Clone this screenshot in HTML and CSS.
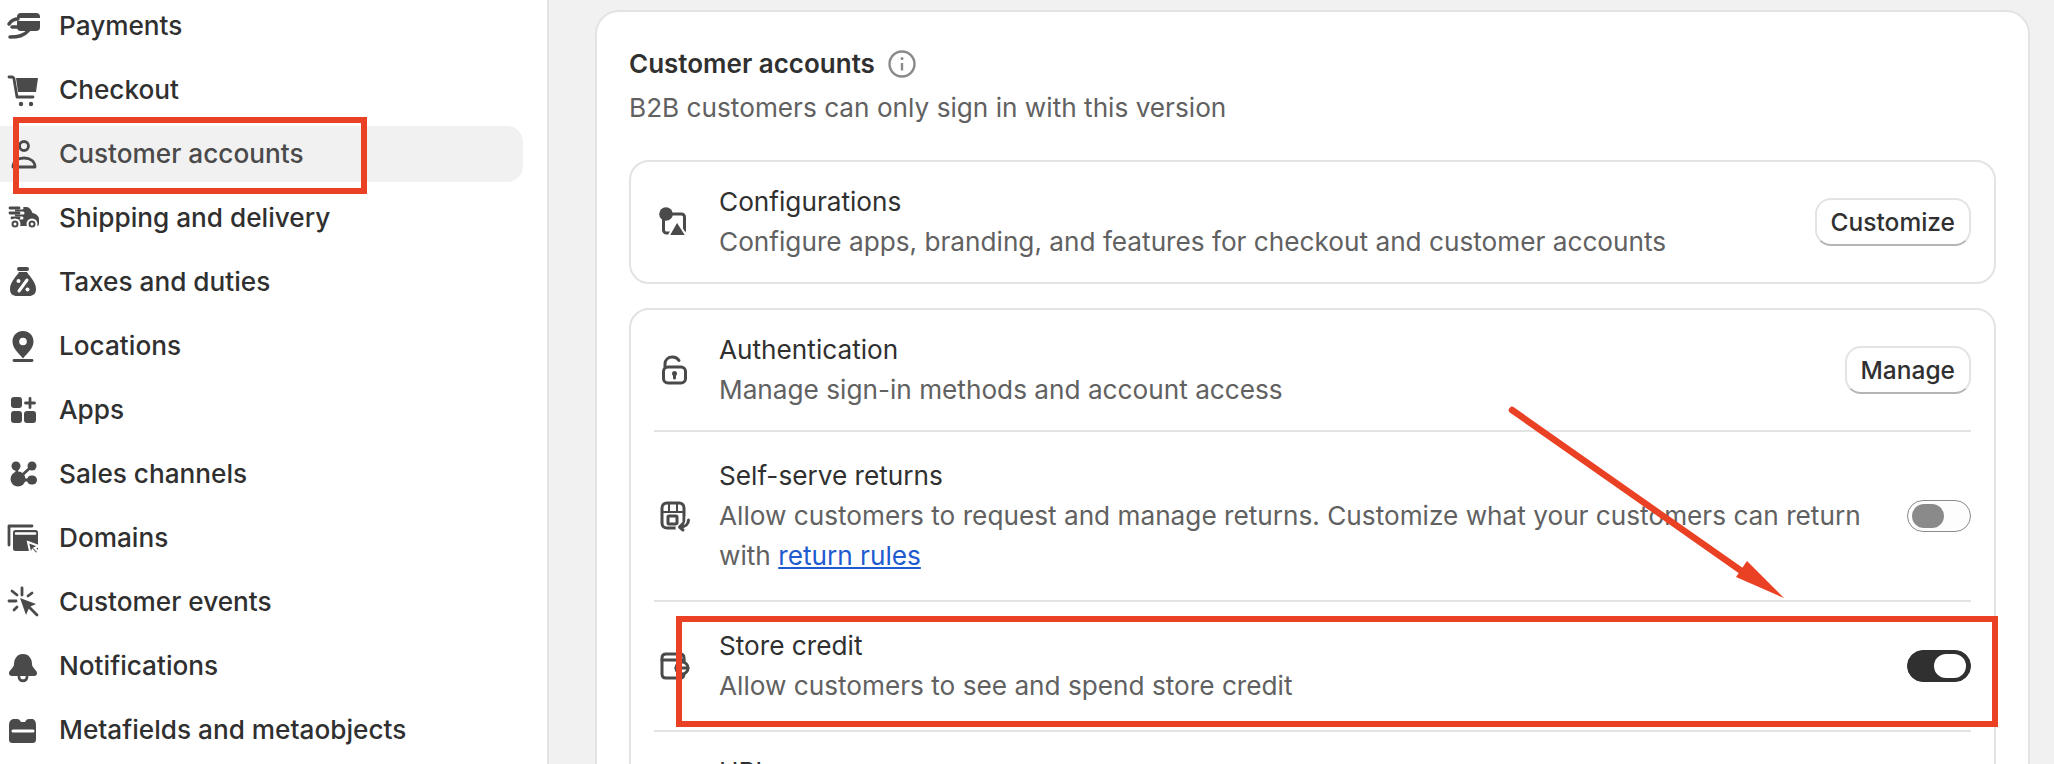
FILE: index.html
```html
<!DOCTYPE html>
<html lang="en">
<head>
  <meta charset="UTF-8">
  <title>Customer accounts settings</title>
  <link rel="stylesheet" href="styles.css">
</head>
<body>

  <div class="page">

    <nav class="sidebar">
      <a class="nav-item">
        <svg class="icon" viewBox="0 0 40 40"><rect x="14" y="7" width="23" height="18" rx="4" class="fill"/><path d="M12 13.500h26" class="cut"/><path d="M6 18c2-3 5-5 9-5M9 21h11M7 31c8 0 14-1 19-7" class="line line-bold"/></svg>
        <span>Payments</span>
      </a>
      <a class="nav-item">
        <svg class="icon" viewBox="0 0 40 40"><path d="M13 8h22l-2 14H15z" class="fill"/><path d="M6 7h3c1 0 2 1 2 2l3 18h16" class="line"/><circle cx="18" cy="34" r="2.200" class="fill"/><circle cx="28" cy="34" r="2.200" class="fill"/></svg>
        <span>Checkout</span>
      </a>
      <a class="nav-item nav-item-active">
        <svg class="icon" viewBox="0 0 40 40"><circle cx="21" cy="12" r="4.500" class="line"/><path d="M10 33c0-6 5-9 11-9s11 3 11 9z" class="line"/></svg>
        <span>Customer accounts</span>
      </a>
      <a class="nav-item">
        <svg class="icon" viewBox="0 0 40 40"><path d="M12 9h11c3 0 5 2 6 5l.5 1c3 .5 6.500 3 6.500 6v5c0 1-1 2-2 2H13c-1 0-1-1-1-2z" class="fill"/><path d="M7 10h12M7 15h13M9 20h10" class="cut"/><path d="M7 10h9M7 15h9M9 20h7" class="line"/><circle cx="12" cy="26" r="4.500" class="fill halo"/><circle cx="29" cy="26" r="4.500" class="fill halo"/><circle cx="12" cy="26" r="1.500" fill="#fff"/><circle cx="29" cy="26" r="1.500" fill="#fff"/></svg>
        <span>Shipping and delivery</span>
      </a>
      <a class="nav-item">
        <svg class="icon" viewBox="0 0 40 40"><rect x="14" y="5" width="12" height="4" rx="2" class="fill"/><path d="M16 10h8c1 3 9 9 9 17 0 5-3 7-7 7H14c-4 0-7-2-7-7 0-8 8-14 9-17z" class="fill"/><path d="M24 18l-8 11" class="cut"/><circle cx="15.500" cy="19" r="2" fill="#fff"/><circle cx="24.500" cy="27.500" r="2" fill="#fff"/></svg>
        <span>Taxes and duties</span>
      </a>
      <a class="nav-item">
        <svg class="icon" viewBox="0 0 40 40"><path d="M20 5c6 0 10.500 4.500 10.500 10.500 0 7-6.500 12-10.500 17-4-5-10.500-10-10.500-17C9.500 9.500 14 5 20 5z" class="fill"/><circle cx="20" cy="15.500" r="3.800" fill="#fff"/><path d="M11 34.500h18" class="line"/></svg>
        <span>Locations</span>
      </a>
      <a class="nav-item">
        <svg class="icon" viewBox="0 0 40 40"><rect x="8" y="7" width="11" height="11" rx="3" class="fill"/><rect x="8" y="21" width="11" height="12" rx="3" class="fill"/><rect x="21" y="21" width="12" height="12" rx="3" class="fill"/><path d="M27 8.500v9M22.500 13h9" class="line"/></svg>
        <span>Apps</span>
      </a>
      <a class="nav-item">
        <svg class="icon" viewBox="0 0 40 40"><circle cx="15" cy="25" r="7.500" class="fill"/><circle cx="13" cy="12" r="4.500" class="fill"/><circle cx="29" cy="12" r="4.500" class="fill"/><rect x="24" y="21.500" width="10" height="9" rx="4.500" class="fill"/><path d="M13 12l2 13M29 12L15 25M29 26H15" class="line"/></svg>
        <span>Sales channels</span>
      </a>
      <a class="nav-item">
        <svg class="icon" viewBox="0 0 40 40"><path d="M6 27V8h23" class="line"/><rect x="10" y="12" width="25" height="21" rx="2.500" class="fill"/><path d="M13 15.500h19" class="cut cut-thin"/><path d="M25 24l11 4-4.500 2 4 4-2.500 2-3.500-4-2 4z" class="fill halo"/></svg>
        <span>Domains</span>
      </a>
      <a class="nav-item">
        <svg class="icon" viewBox="0 0 40 40"><path d="M17 16l16 6-6.500 3L23 33z" class="fill"/><path d="M26 25l8 8M19 6v7M9 9l5 4M29 11l-4 3M6 19h7M11 28l3-3" class="line"/></svg>
        <span>Customer events</span>
      </a>
      <a class="nav-item">
        <svg class="icon" viewBox="0 0 40 40"><path d="M20 8c6 0 9 5 9 10 0 4 5 6 5 9 0 2-1 3-3 3H9c-2 0-3-1-3-3 0-3 5-5 5-9 0-5 3-10 9-10z" class="fill"/><path d="M16 31c0 5 8 5 8 0" class="line"/></svg>
        <span>Notifications</span>
      </a>
      <a class="nav-item">
        <svg class="icon" viewBox="0 0 40 40"><path d="M10 9h4c2 0 3 1 4 3h4c1-2 2-3 4-3h4c2 1 3 3 3 6v14c0 3-1 4-4 4H10c-3 0-4-1-4-4V15c0-3 1-5 4-6z" class="fill"/><path d="M10 21h20" class="cut"/></svg>
        <span>Metafields and metaobjects</span>
      </a>
    </nav>

    <main class="content">
      <section class="card">
        <h2 class="card-title">Customer accounts
          <svg class="info" viewBox="0 0 28 28"><circle cx="14" cy="14" r="12.500"/><path d="M14 13v7.500"/><circle cx="14" cy="8.500" r="1.500" class="info-dot"/></svg>
        </h2>
        <p class="card-sub">B2B customers can only sign in with this version</p>

        <div class="box">
          <div class="row row-tight">
            <svg class="row-icon" viewBox="0 0 40 40"><rect x="9.500" y="12" width="21" height="19" rx="3" class="line"/><path d="M14.500 34l8.500-15 9.500 15z" class="fill halo"/><circle cx="12" cy="12" r="6.800" class="fill"/></svg>
            <div class="row-text">
              <div class="row-title">Configurations</div>
              <div class="row-desc">Configure apps, branding, and features for checkout and customer accounts</div>
            </div>
            <button class="btn">Customize</button>
          </div>
        </div>

        <div class="box">
          <div class="row row-tight">
            <svg class="row-icon" viewBox="0 0 40 40"><rect x="9.500" y="17" width="22" height="16" rx="4.500" class="line"/><path d="M11 17v-3c0-4 3-7 7.500-7 3 0 5 1 6.500 3.500" class="line"/><circle cx="20.500" cy="23.500" r="2.500" class="fill"/><path d="M20.500 24v4" class="line"/></svg>
            <div class="row-text">
              <div class="row-title">Authentication</div>
              <div class="row-desc">Manage sign-in methods and account access</div>
            </div>
            <button class="btn">Manage</button>
          </div>
          <div class="row">
            <svg class="row-icon" viewBox="0 0 40 40"><path d="M13 7h12c3 0 5 2 5 5v15c0 3-2 5-5 5H13c-3 0-5-2-5-5V12c0-3 2-5 5-5z" class="line"/><path d="M8 16h22M15 7v9M23 7v9" class="line line-thin"/><rect x="14" y="20" width="9" height="8" rx="1" class="line"/><path d="M35 22c1 6-3 10-10 10" class="cut cut-wide"/><path d="M34.500 24c0 4-3 7-8 7M29 27.500L25.500 31l3.500 3" class="line"/></svg>
            <div class="row-text">
              <div class="row-title">Self-serve returns</div>
              <div class="row-desc">Allow customers to request and manage returns. Customize what your customers can return with <a class="link">return rules</a></div>
            </div>
            <div class="toggle"><span class="knob"></span></div>
          </div>
          <div class="row">
            <svg class="row-icon" viewBox="0 0 40 40"><path d="M12 8h14c3 0 4 2 4 4v16c0 3-2 4-4 4H12c-3 0-4-2-4-4V12c0-2 1-4 4-4z" class="line"/><path d="M8 14h22" class="line"/><circle cx="28" cy="22" r="6" class="line halo-fill"/><path d="M22 22h12" class="line"/></svg>
            <div class="row-text">
              <div class="row-title">Store credit</div>
              <div class="row-desc">Allow customers to see and spend store credit</div>
            </div>
            <div class="toggle toggle-on"><span class="knob"></span></div>
          </div>
          <div class="row row-tight">
            <div class="row-icon"></div>
            <div class="row-text">
              <div class="row-title">URL</div>
            </div>
          </div>
        </div>
      </section>
    </main>

  </div>

  <!-- red annotations drawn over the screenshot -->
  <div class="mark mark-nav"></div>
  <div class="mark mark-credit"></div>
  <svg class="arrow" viewBox="0 0 2054 764">
    <path d="M1512 410L1750 577" stroke="#ea4125" stroke-width="6.500" stroke-linecap="round"/>
    <path d="M1784 598L1736 577L1747 561z" fill="#ea4125"/>
  </svg>

</body>
</html>
```

FILE: styles.css
```css
html, body {
  margin: 0;
  height: 764px;
  overflow: hidden;
}
body {
  position: relative;
  background: #f1f1f1;
  color: #303030;
  font-family: Inter, "Liberation Sans", sans-serif;
  font-size: 26.2px;
}
.page {
  display: flex;
  height: 764px;
}

/* sidebar */
.sidebar {
  width: 549px;
  flex: none;
  box-sizing: border-box;
  padding: 0 24px 0 0;
  background: #fff;
  border-right: 2px solid #e3e3e3;
  display: flex;
  flex-direction: column;
  gap: 8px;
  overflow: hidden;
}
.nav-item {
  display: flex;
  align-items: center;
  gap: 16px;
  box-sizing: border-box;
  height: 56px;
  flex: none;
  margin-left: -12px;
  padding: 0 0 1px 15px;
  border-radius: 16px;
  font-weight: 500;
}
.nav-item:first-child {
  margin-top: -2px;
}
.nav-item-active {
  background: #f1f1f1;
  color: #4a4a4a;
}
.icon {
  width: 40px;
  height: 40px;
  flex: none;
}

/* shared icon parts */
.fill {
  fill: #4a4a4a;
}
.line {
  fill: none;
  stroke: #4a4a4a;
  stroke-width: 2.800;
  stroke-linecap: round;
  stroke-linejoin: round;
}
.line-thin {
  stroke-width: 2;
}
.line-bold {
  stroke-width: 3.500;
}
.cut {
  fill: none;
  stroke: #fff;
  stroke-width: 3;
  stroke-linecap: round;
}
.cut-thin {
  stroke-width: 2.500;
}
.cut-wide {
  stroke-width: 7;
}
.halo {
  stroke: #fff;
  stroke-width: 2;
}
.halo-fill {
  fill: #fff;
}

/* main column */
.content {
  flex: 1;
  padding: 10px 24px 0 46px;
}
.card {
  background: #fff;
  border: 2px solid #e3e3e3;
  border-radius: 24px;
  padding: 32px;
  height: 1000px;
}
.card-title {
  display: flex;
  align-items: center;
  gap: 13px;
  margin: 0 0 4px;
  font-size: 26px;
  font-weight: 600;
  line-height: 40px;
}
.info {
  width: 28px;
  height: 28px;
  fill: none;
  stroke: #8a8a8a;
  stroke-width: 2.400;
}
.info-dot {
  fill: #8a8a8a;
  stroke: none;
}
.card-sub {
  margin: 0 0 32px;
  color: #616161;
  line-height: 40px;
}

.box {
  border: 2px solid #e3e3e3;
  border-radius: 20px;
  padding: 0 23px;
  margin-bottom: 24px;
}
.row {
  display: flex;
  align-items: center;
  gap: 25px;
  padding: 24px 0;
  border-top: 2px solid #e3e3e3;
}
.row:first-child {
  border-top: none;
}
.row-tight {
  padding: 20px 0;
}
.row-icon {
  width: 40px;
  height: 40px;
  flex: none;
}
.row-icon .line {
  stroke-width: 3;
}
.row-icon .line-thin {
  stroke-width: 2;
}
.row-text {
  flex: 1;
  line-height: 40px;
}
.row-title {
  font-weight: 430;
}
.row-desc {
  color: #616161;
}
.link {
  color: #1f5bd0;
  text-decoration: underline;
}

.btn {
  height: 48px;
  padding: 0 14px;
  background: #fff;
  border: 2px solid #e3e3e3;
  border-bottom-color: #b5b5b5;
  border-radius: 16px;
  color: #303030;
  font-family: inherit;
  font-size: 24.500px;
  font-weight: 500;
}

.toggle {
  display: flex;
  box-sizing: border-box;
  width: 64px;
  height: 32px;
  flex: none;
  padding: 3px 4px;
  background: #fdfdfd;
  border: 1.500px solid #8a8a8a;
  border-radius: 16px;
}
.knob {
  width: 32px;
  height: 100%;
  background: #8a8a8a;
  border-radius: 12px;
}
.toggle-on {
  justify-content: flex-end;
  background: #303030;
  border-color: #303030;
}
.toggle-on .knob {
  background: #fff;
}

/* annotations */
.mark {
  position: absolute;
  box-sizing: border-box;
  border: 6px solid #ea4125;
}
.mark-nav {
  left: 13px;
  top: 117px;
  width: 354px;
  height: 77px;
}
.mark-credit {
  left: 676px;
  top: 616px;
  width: 1322px;
  height: 111px;
}
.arrow {
  position: absolute;
  left: 0;
  top: 0;
  width: 2054px;
  height: 764px;
}
```
